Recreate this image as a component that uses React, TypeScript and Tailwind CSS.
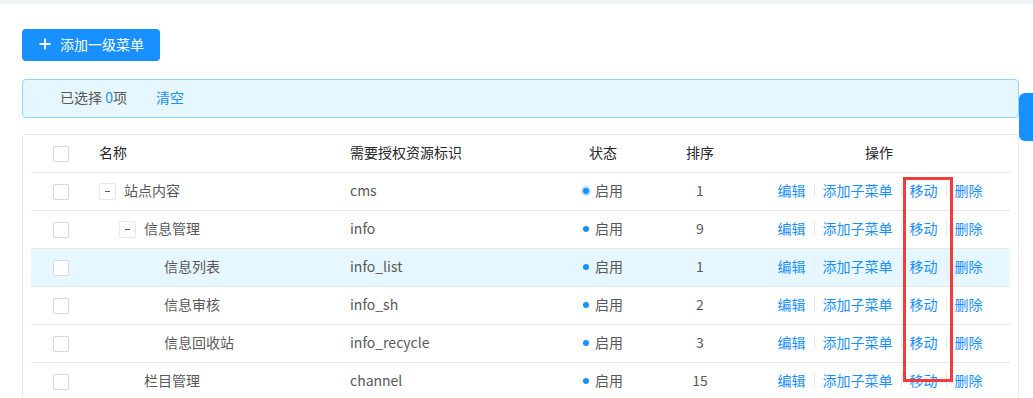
import React from 'react';

type Row = {
  name: string;
  level: number;
  expandable?: boolean;
  code: string;
  sort: number;
  processing?: boolean;
  active?: boolean;
};

const rows: Row[] = [
  { name: '站点内容', level: 0, expandable: true, code: 'cms', sort: 1, processing: true },
  { name: '信息管理', level: 1, expandable: true, code: 'info', sort: 9 },
  { name: '信息列表', level: 2, code: 'info_list', sort: 1, active: true },
  { name: '信息审核', level: 2, code: 'info_sh', sort: 2 },
  { name: '信息回收站', level: 2, code: 'info_recycle', sort: 3 },
  { name: '栏目管理', level: 1, code: 'channel', sort: 15 },
];

const indent = ['pl-0', 'pl-5', 'pl-10'];
const cols = 'grid grid-cols-[60px_251px_213px_96px_98px_260px]';

function Checkbox() {
  return <span className="block h-4 w-4 rounded-[2px] border border-[#d9d9d9] bg-white" />;
}

function Sep() {
  return <span className="mx-2 inline-block h-[14px] w-px bg-[#e8e8e8]" />;
}

export default function App() {
  return (
    <div
      className="relative h-[398px] w-[1033px] overflow-hidden bg-white text-sm"
      style={{ fontFamily: '"Noto Sans CJK SC", "Liberation Sans", sans-serif' }}
    >
      <div className="h-1 bg-[#f0f2f5]" />

      <div className="ml-[22px] w-[997px]">
        {/* 新增按钮 */}
        <button className="mt-[25px] flex h-8 w-[138px] items-center rounded-[4px] bg-[#1890ff] pb-[2px] pl-[17px] text-white">
          <svg width="12" height="12" viewBox="0 0 12 12" className="mr-[9px]">
            <path d="M6 0.5v11M0.5 6h11" stroke="white" strokeWidth="1.8" />
          </svg>
          添加一级菜单
        </button>

        {/* 已选择提示 */}
        <div className="mt-[18px] flex h-[39px] items-center rounded-[4px] border border-[#91d5ff] bg-[#e6f7ff] pb-[3px] pl-[37px] text-[#595959]">
          <span>
            已选择 <span className="text-[#1890ff]">0</span>项
          </span>
          <a className="ml-[29px] text-[#1890ff]">清空</a>
        </div>

        {/* 菜单表格 */}
        <div className="mt-4 rounded-[4px] border border-[#e8e8e8] px-2 pb-4">
          <div className={`${cols} h-[38px] items-center border-b border-[#e8e8e8] pb-[3px] text-[#262626]`}>
            <div className="flex justify-center pt-[3px]">
              <Checkbox />
            </div>
            <div className="pl-2">名称</div>
            <div className="pl-2">需要授权资源标识</div>
            <div className="text-center">状态</div>
            <div className="text-center">排序</div>
            <div className="text-center">操作</div>
          </div>

          {rows.map((r) => (
            <div
              key={r.code}
              className={`${cols} h-[38px] items-center border-b border-[#e8e8e8] pb-[3px] text-[#595959] ${r.active ? 'bg-[#e6f7ff]' : ''}`}
            >
              <div className="flex justify-center pt-[3px]">
                <Checkbox />
              </div>
              <div className="flex items-center pl-2">
                <span className={`flex items-center ${indent[r.level]}`}>
                  {r.expandable ? (
                    <span className="mr-2 mt-[2px] flex h-[17px] w-[17px] items-center justify-center rounded-[2px] border border-[#e8e8e8] bg-white">
                      <span className="h-px w-[5px] bg-[#595959]" />
                    </span>
                  ) : (
                    <span className="w-[25px]" />
                  )}
                  {r.name}
                </span>
              </div>
              <div className="pl-2">{r.code}</div>
              <div className="flex items-center justify-center">
                {r.processing ? (
                  <span className="mr-[6px] mt-[2px] h-[6px] w-[6px] rounded-full bg-[#1890ff] ring-2 ring-[#bae0ff]" />
                ) : (
                  <span className="mr-[6px] mt-[2px] h-[6px] w-[6px] rounded-full bg-[#1890ff]" />
                )}
                启用
              </div>
              <div className="text-center">{r.sort}</div>
              <div className="flex items-center justify-center pl-[2px] text-[#1890ff]">
                <a>编辑</a>
                <Sep />
                <a>添加子菜单</a>
                <Sep />
                <a>移动</a>
                <Sep />
                <a>删除</a>
              </div>
            </div>
          ))}
        </div>
      </div>

      {/* 右侧悬浮标签 */}
      <div className="absolute left-[1019px] top-[93px] h-12 w-[14px] rounded-l-md bg-[#1890ff]" />

      {/* 标注框 */}
      <div className="absolute left-[903px] top-[177px] h-[205px] w-[50px] border-[3px] border-[#f23c3c]" />
    </div>
  );
}
